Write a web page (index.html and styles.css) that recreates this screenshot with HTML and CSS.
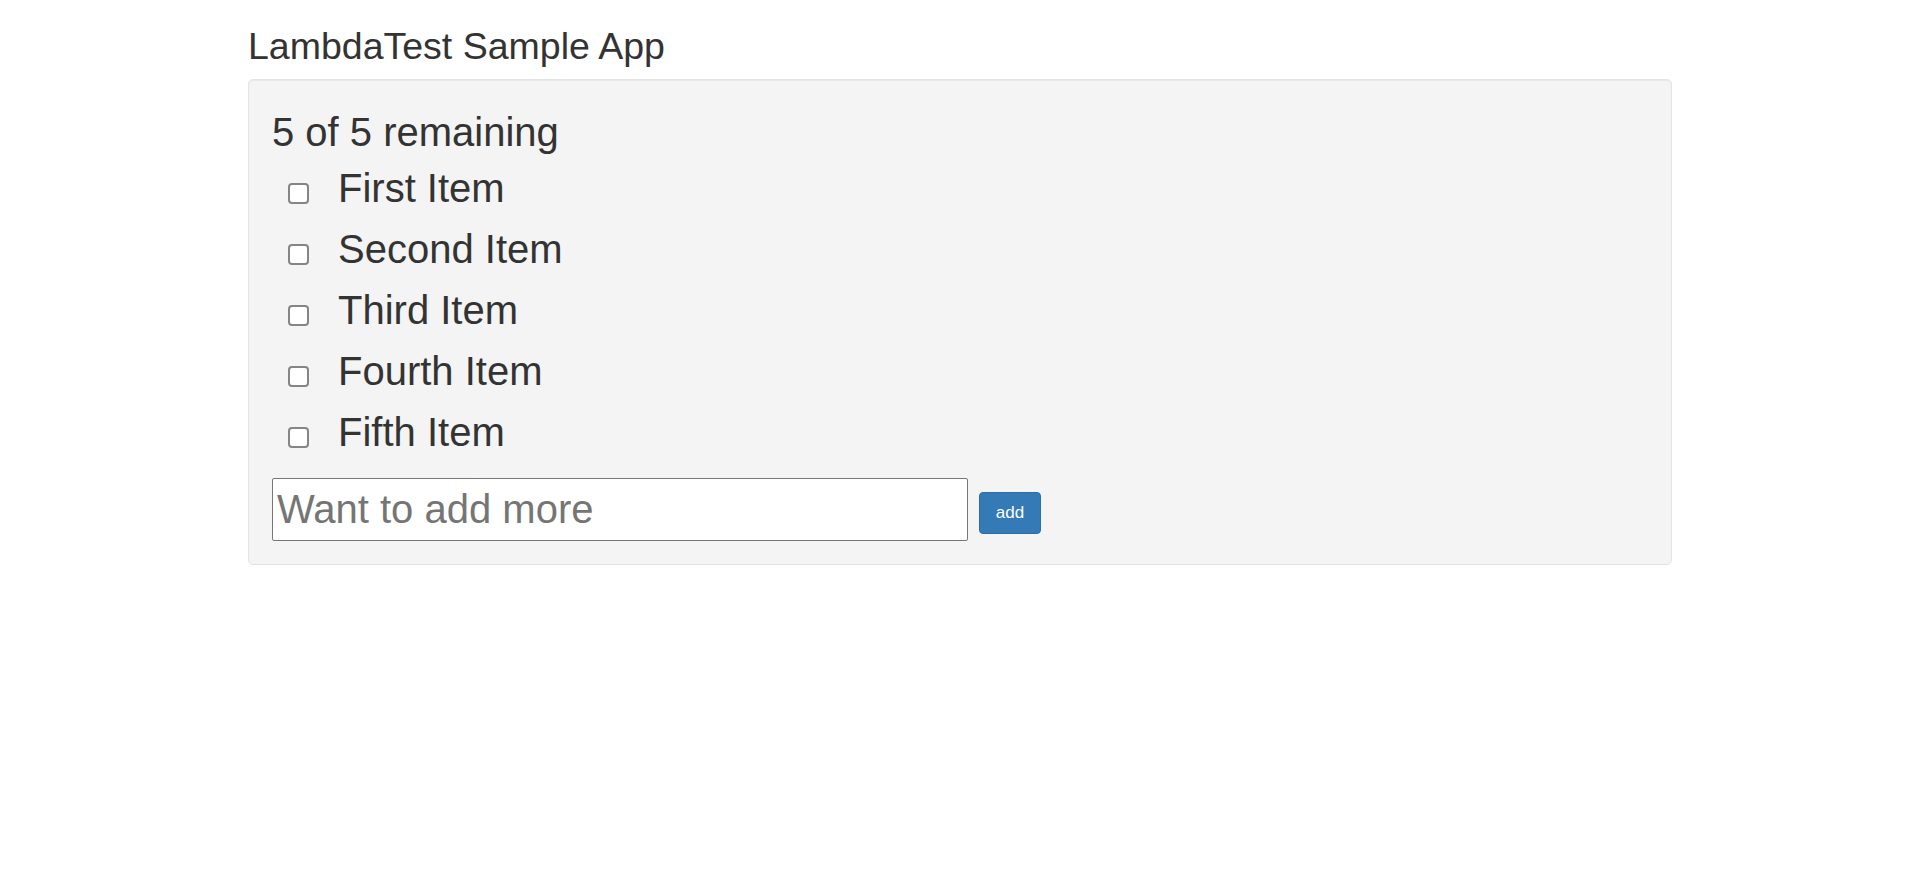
FILE: index.html
```html
<!DOCTYPE html>
<html lang="en">
<head>
<meta charset="utf-8">
<title>LambdaTest Sample App</title>
<link rel="stylesheet" href="styles.css">
</head>
<body>
<div class="container">
  <h2 class="title">LambdaTest Sample App</h2>
  <div class="well">
    <div class="remaining">5 of 5 remaining</div>
    <ul class="todo-list">
      <li class="todo-item"><input class="check" type="checkbox" name="li1"><span class="todo-text">First Item</span></li>
      <li class="todo-item"><input class="check" type="checkbox" name="li2"><span class="todo-text">Second Item</span></li>
      <li class="todo-item"><input class="check" type="checkbox" name="li3"><span class="todo-text">Third Item</span></li>
      <li class="todo-item"><input class="check" type="checkbox" name="li4"><span class="todo-text">Fourth Item</span></li>
      <li class="todo-item"><input class="check" type="checkbox" name="li5"><span class="todo-text">Fifth Item</span></li>
    </ul>
    <form class="add-form" onsubmit="return false;">
      <input class="add-input" type="text" placeholder="Want to add more">
      <button class="btn-add" type="button">add</button>
    </form>
  </div>
</div>
</body>
</html>
```

FILE: styles.css
```css
* { box-sizing: border-box; }

html, body {
  margin: 0;
  padding: 0;
  background: #ffffff;
}

body {
  font-family: "Liberation Sans", Arial, sans-serif;
  color: #333333;
}

.container {
  width: 1424px;
  margin: 0 auto;
  padding-top: 26px;
}

.title {
  margin: 0 0 13px 0;
  font-size: 37.5px;
  font-weight: 400;
  line-height: 40px;
  color: #333333;
}

.well {
  background: #f4f4f4;
  border: 1px solid #e3e3e3;
  border-radius: 5px;
  box-shadow: inset 0 1px 1px rgba(0, 0, 0, 0.05);
  padding: 24px 23px 23px 23px;
}

.remaining {
  margin-top: 6px;
  font-size: 40px;
  line-height: 44px;
}

.todo-list {
  list-style: none;
  margin: 4px 0 0 0;
  padding: 0 0 0 16px;
}

.todo-item {
  font-size: 40px;
  line-height: 61px;
  height: 61px;
  white-space: nowrap;
}

.check {
  -webkit-appearance: none;
  appearance: none;
  display: inline-block;
  width: 21px;
  height: 21px;
  margin: 0 29px 0 0;
  border: 2px solid #858585;
  border-radius: 4px;
  background: #ffffff;
  vertical-align: -2px;
}

.todo-text {
  color: #333333;
}

.add-form {
  display: flex;
  align-items: flex-start;
  margin: 15px 0 0 0;
}

.add-input {
  width: 696px;
  height: 63px;
  margin: 0;
  padding: 0 4px;
  border: 1px solid #767676;
  border-radius: 2px;
  background: #ffffff;
  font-family: "Liberation Sans", Arial, sans-serif;
  font-size: 40px;
  color: #333333;
}

.add-input::placeholder {
  color: #757575;
  opacity: 1;
}

.btn-add {
  width: 62px;
  height: 42px;
  margin: 14px 0 0 11px;
  padding: 0;
  background: #337ab7;
  border: 1px solid #2e6da4;
  border-radius: 4px;
  color: #ffffff;
  font-family: "Liberation Sans", Arial, sans-serif;
  font-size: 17px;
  line-height: 40px;
}
```
